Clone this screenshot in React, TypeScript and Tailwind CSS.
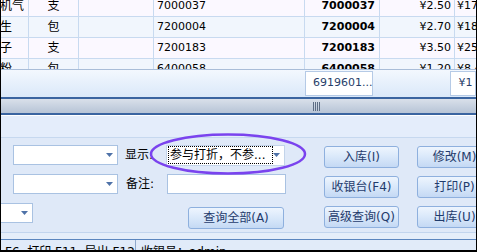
const rows = [
  { name: '打火机气', unit: '支', code: '7000037', price: '¥2.50', total: '¥17.50', bg: 'bg-[#fbf8ff]' },
  { name: '咸花生', unit: '包', code: '7200004', price: '¥2.70', total: '¥18.90', bg: 'bg-[#f1f6fd]' },
  { name: '香瓜子', unit: '支', code: '7200183', price: '¥3.50', total: '¥25.00', bg: 'bg-[#fbf8ff]' },
  { name: '干淀粉', unit: '包', code: '6400058', price: '¥1.20', total: '¥8.40', bg: 'bg-[#f1f6fd]' },
];

const font = "font-['DejaVu_Sans','Noto_Sans_CJK_SC',sans-serif]";

function Arrow() {
  return (
    <svg width="7" height="4" viewBox="0 0 7 4" className="shrink-0">
      <path d="M0 0H7L3.5 4Z" fill="#4f72a8" />
    </svg>
  );
}

function Combo({ className, children }: { className: string; children?: React.ReactNode }) {
  return (
    <div className={`h-[20px] bg-white border border-[#a9c2e2] flex items-center justify-end pr-[4px] shrink-0 ${className}`}>
      {children}
      <Arrow />
    </div>
  );
}

function Btn({ label, className = 'w-[75px]' }: { label: string; className?: string }) {
  return (
    <div
      className={`h-[22px] shrink-0 rounded-[3px] border border-[#8eb0de] bg-gradient-to-b from-[#eef5fe] via-[#d9e8fa] to-[#c4d9f4] flex items-center justify-center text-[12px] leading-none text-[#1f3b6c] ${className}`}
    >
      {label}
    </div>
  );
}

export default function App() {
  return (
    <div className={`relative w-[477px] h-[252px] overflow-hidden border-l border-r border-b-2 border-black bg-[#dfe9f8] flex flex-col ${font}`}>
      {/* grid */}
      <div className="h-[69px] overflow-hidden shrink-0">
        <div className="-mt-[4px] -ml-[28px]">
          {rows.map((r) => (
            <div key={r.code} className={`h-[21px] flex border-b border-[#c8daf0] text-[11px] text-black ${r.bg}`}>
              <div className="w-[56px] shrink-0 border-r border-[#c8daf0] pl-[3px] flex items-center whitespace-nowrap overflow-hidden text-[12px]">{r.name}</div>
              <div className="w-[50px] shrink-0 border-r border-[#c8daf0] flex items-center justify-center text-[12px]">{r.unit}</div>
              <div className="w-[75px] shrink-0 border-r border-[#c8daf0]" />
              <div className="w-[151px] shrink-0 border-r border-[#c8daf0] pl-[3px] flex items-center">{r.code}</div>
              <div className="w-[75px] shrink-0 border-r border-[#c8daf0] pr-[4px] flex items-center justify-end font-bold">{r.code}</div>
              <div className="w-[75px] shrink-0 border-r border-[#c8daf0] pr-[3px] flex items-center justify-end">{r.price}</div>
              <div className="w-[80px] shrink-0 pl-[2px] flex items-center">{r.total}</div>
            </div>
          ))}
        </div>
      </div>

      {/* footer totals */}
      <div className="h-[28px] shrink-0 border-t border-[#a9bdd8] bg-gradient-to-b from-[#f3f8fe] to-[#dae8f9] flex pt-[1px]">
        <div className="ml-[304px] w-[73px] h-[25px] bg-white border border-[#b5cae6] pl-[7px] flex items-center text-[11px] text-[#27406a]">6919601...</div>
        <div className="ml-[77px] w-[60px] h-[25px] bg-white border border-[#b5cae6] pl-[7px] flex items-center text-[11px] text-[#27406a]">¥1</div>
      </div>

      {/* horizontal scrollbar */}
      <div className="h-[18px] shrink-0 border-y-2 border-[#3a64a0] bg-gradient-to-b from-[#d9e0ea] to-[#b7c4d6] flex items-center">
        <div className="ml-[312px] flex gap-[1px]">
          <div className="w-[1px] h-[9px] bg-[#5d6d84]" />
          <div className="w-[1px] h-[9px] bg-[#5d6d84]" />
          <div className="w-[1px] h-[9px] bg-[#5d6d84]" />
          <div className="w-[1px] h-[9px] bg-[#5d6d84]" />
        </div>
      </div>

      <div className="h-[23px] shrink-0 border-t border-white border-b border-b-[#c6d8ef] bg-[#e4edfb]" />

      {/* form panel */}
      <div className="h-[94px] shrink-0 flex text-[12px] leading-none text-black">
        <div className="w-[300px] shrink-0 flex flex-col pt-[7px] gap-[9px]">
          <div className="h-[20px] flex items-center">
            <Combo className="ml-[12px] w-[105px]" />
            <div className="ml-[7px] w-[41px]">显示:</div>
            <div className="w-[119px] h-[21px] bg-white border border-[#c3d4ea] flex items-center pl-[1px] pr-[4px]">
              <div className="h-[18px] w-[105px] border border-dotted border-black flex items-center pl-[1px] whitespace-nowrap overflow-hidden">参与打折，不参...</div>
              <div className="flex-1 flex justify-end"><Arrow /></div>
            </div>
          </div>
          <div className="h-[20px] flex items-center">
            <Combo className="ml-[12px] w-[105px]" />
            <div className="ml-[8px] w-[41px]">备注:</div>
            <div className="w-[119px] h-[20px] bg-white border border-[#a9c2e2]" />
          </div>
          <div className="h-[20px] flex items-start">
            <Combo className="-ml-[20px] w-[52px]" />
            <Btn label="查询全部(A)" className="ml-[155px] w-[96px] mt-[4px]" />
          </div>
        </div>
        <div className="ml-[23px] flex flex-col pt-[8px] gap-[8px]">
          <Btn label="入库(I)" />
          <Btn label="收银台(F4)" />
          <Btn label="高级查询(Q)" />
        </div>
        <div className="ml-[18px] flex flex-col pt-[8px] gap-[8px]">
          <Btn label="修改(M)" />
          <Btn label="打印(P)" />
          <Btn label="出库(U)" />
        </div>
      </div>

      <div className="h-[7px] shrink-0 border-t border-[#c2d5ee] bg-[#e5eefa]" />

      {/* status bar */}
      <div className="h-[11px] shrink-0 border-t border-[#5b86bf] bg-[#e1ebf9] overflow-hidden flex text-[12px] leading-[12px] text-black">
        <div className="w-[134px] shrink-0 pl-[4px] pt-[6px] whitespace-pre">F6  打印 F11  导出 F12</div>
        <div className="w-[1px] h-full bg-[#8ea8cc]" />
        <div className="pl-[5px] pt-[6px] whitespace-pre">收银员：admin</div>
      </div>

      {/* annotation ellipse */}
      <svg className="absolute left-[147px] top-[132px] pointer-events-none" width="160" height="44" viewBox="0 0 160 44">
        <ellipse cx="80" cy="22" rx="77" ry="19.5" fill="none" stroke="#7a43ee" strokeWidth="2.5" />
      </svg>
    </div>
  );
}
